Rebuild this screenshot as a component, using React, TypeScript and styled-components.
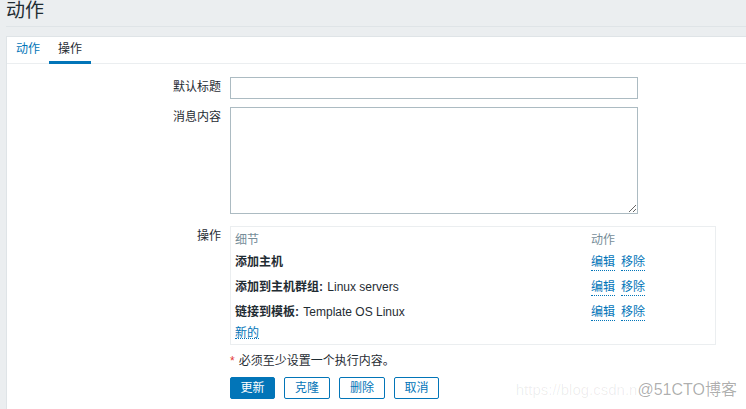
import React from "react";
import styled, { createGlobalStyle } from "styled-components";

const GlobalStyle = createGlobalStyle`
  html, body {
    margin: 0;
    padding: 0;
    height: 100%;
    overflow: hidden;
    background: #ebeef0;
    font-family: "Liberation Sans", Arial, "Noto Sans CJK SC", sans-serif;
    font-size: 12px;
    color: #1f2c33;
  }
`;

const Page = styled.div`
  position: relative;
  height: 409px;
  padding-left: 6px;
  overflow: hidden;
`;

const Header = styled.h1`
  margin: 0;
  height: 26px;
  border-bottom: 1px solid #dfe4e7;
  font-size: 19px;
  font-weight: 400;
  line-height: 22px;
  color: #1f2c33;
`;

const Panel = styled.div`
  margin-top: 9px;
  height: 373px;
  background: #fff;
  border-top: 1px solid #dfe4e7;
  border-left: 1px solid #dfe4e7;
`;

const Tabs = styled.div`
  display: flex;
  height: 26px;
  border-bottom: 1px solid #ebeef0;
`;

const Tab = styled.a<{ $active?: boolean }>`
  width: 42px;
  box-sizing: border-box;
  height: 27px;
  line-height: 24px;
  text-align: center;
  color: ${(p) => (p.$active ? "#1f2c33" : "#0275b8")};
  border-bottom: 3px solid ${(p) => (p.$active ? "#0275b8" : "transparent")};
`;

const Form = styled.div`
  display: grid;
  grid-template-columns: 214px 1fr;
  column-gap: 9px;
  padding-top: 13px;
`;

const Label = styled.div<{ $top?: number }>`
  text-align: right;
  line-height: 14px;
  padding-top: ${(p) => p.$top ?? 3}px;
`;

const Field = styled.div`
  margin-bottom: 8px;
`;

const TitleInput = styled.input`
  display: block;
  box-sizing: border-box;
  width: 408px;
  height: 22px;
  margin: 0;
  padding: 0 4px;
  border: 1px solid #acbbc2;
  background: #fff;
  outline: none;
`;

const MessageInput = styled.textarea`
  display: block;
  box-sizing: border-box;
  width: 408px;
  height: 107px;
  margin: 0;
  padding: 4px;
  border: 1px solid #acbbc2;
  background: #fff;
  outline: none;
`;

const OperationsBox = styled.div`
  box-sizing: border-box;
  width: 486px;
  height: 119px;
  margin-top: 4px;
  padding: 6px 5px 0 4px;
  border: 1px solid #ebeef0;
`;

const OperationRow = styled.div<{ $height: number }>`
  display: grid;
  grid-template-columns: 356px 1fr;
  height: ${(p) => p.$height}px;
  line-height: 15px;
`;

const HeadCell = styled.div`
  color: #768d99;
`;

const Strong = styled.b`
  font-weight: 700;
  margin-right: 1px;
`;

const Actions = styled.div`
  display: flex;
  gap: 6px;
`;

const DottedLink = styled.a`
  height: 15px;
  color: #0275b8;
  border-bottom: 1px dotted #0275b8;
`;

const NewLink = styled(DottedLink)`
  display: inline-block;
`;

const Required = styled.div`
  margin-top: 8px;
  line-height: 16px;
  height: 16px;
`;

const Asterisk = styled.span`
  color: #e33734;
  margin-right: 4px;
`;

const Buttons = styled.div`
  display: flex;
  gap: 9px;
  margin-top: 8px;
`;

const Button = styled.button<{ $primary?: boolean; $width: number }>`
  box-sizing: border-box;
  height: 22px;
  width: ${(p) => p.$width}px;
  margin: 0;
  padding: 0;
  border: 1px solid #0275b8;
  border-radius: 2px;
  background: ${(p) => (p.$primary ? "#0275b8" : "#fff")};
  color: ${(p) => (p.$primary ? "#fff" : "#0275b8")};
  font-family: inherit;
  font-size: 12px;
  line-height: 20px;
`;

const Watermark = styled.div`
  position: absolute;
  right: 9px;
  bottom: 9px;
  display: flex;
  align-items: center;
  line-height: 20px;
  white-space: nowrap;
`;

const WatermarkUrl = styled.span`
  font-size: 15px;
  color: rgba(0, 0, 0, 0.07);
`;

const WatermarkBrand = styled.span`
  font-size: 16px;
  color: rgba(0, 0, 0, 0.32);
`;

const operations = [
  { name: "添加主机", value: "", height: 25 },
  { name: "添加到主机群组:", value: " Linux servers", height: 25 },
  { name: "链接到模板:", value: " Template OS Linux", height: 18 },
];

const App: React.FC = () => {
  return (
    <Page>
      <GlobalStyle />
      <Header>动作</Header>
      <Panel>
        <Tabs>
          <Tab>动作</Tab>
          <Tab $active>操作</Tab>
        </Tabs>
        <Form>
          <Label>默认标题</Label>
          <Field>
            <TitleInput />
          </Field>
          <Label>消息内容</Label>
          <Field>
            <MessageInput />
          </Field>
          <Label $top={7}>操作</Label>
          <div>
            <OperationsBox>
              <OperationRow $height={22}>
                <HeadCell>细节</HeadCell>
                <HeadCell>动作</HeadCell>
              </OperationRow>
              {operations.map((op) => (
                <OperationRow $height={op.height} key={op.name}>
                  <div>
                    <Strong>{op.name}</Strong>
                    {op.value}
                  </div>
                  <Actions>
                    <DottedLink>编辑</DottedLink>
                    <DottedLink>移除</DottedLink>
                  </Actions>
                </OperationRow>
              ))}
              <NewLink>新的</NewLink>
            </OperationsBox>
            <Required>
              <Asterisk>*</Asterisk>必须至少设置一个执行内容。
            </Required>
            <Buttons>
              <Button $primary $width={45}>更新</Button>
              <Button $width={46}>克隆</Button>
              <Button $width={46}>删除</Button>
              <Button $width={45}>取消</Button>
            </Buttons>
          </div>
        </Form>
      </Panel>
      <Watermark>
        <WatermarkUrl>https://blog.csdn.n</WatermarkUrl>
        <WatermarkBrand>@51CTO博客</WatermarkBrand>
      </Watermark>
    </Page>
  );
};

export default App;
